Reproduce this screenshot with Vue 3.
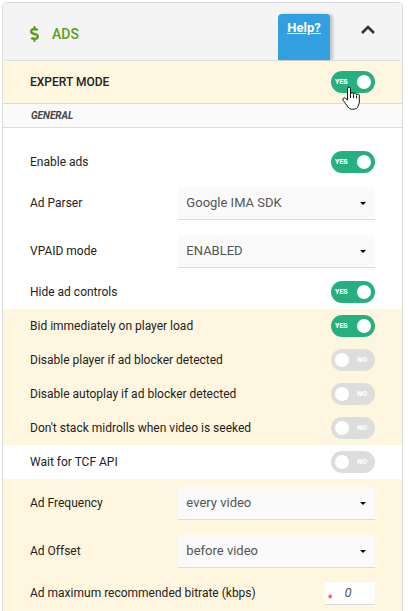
<script setup>
import { ref } from "vue";

const open = ref(true);
const expertMode = ref(true);

const settings = ref([
  { id: "enableAds", label: "Enable ads", type: "toggle", value: true },
  {
    id: "adParser",
    label: "Ad Parser",
    type: "select",
    value: "Google IMA SDK",
    options: ["Google IMA SDK"],
  },
  {
    id: "vpaidMode",
    label: "VPAID mode",
    type: "select",
    value: "ENABLED",
    options: ["ENABLED"],
  },
  { id: "hideControls", label: "Hide ad controls", type: "toggle", value: true },
  {
    id: "bidOnLoad",
    label: "Bid immediately on player load",
    type: "toggle",
    value: true,
    expert: true,
  },
  {
    id: "disablePlayer",
    label: "Disable player if ad blocker detected",
    type: "toggle",
    value: false,
    expert: true,
  },
  {
    id: "disableAutoplay",
    label: "Disable autoplay if ad blocker detected",
    type: "toggle",
    value: false,
    expert: true,
  },
  {
    id: "dontStack",
    label: "Don't stack midrolls when video is seeked",
    type: "toggle",
    value: false,
    expert: true,
  },
  { id: "waitTcf", label: "Wait for TCF API", type: "toggle", value: false },
  {
    id: "adFrequency",
    label: "Ad Frequency",
    type: "select",
    value: "every video",
    options: ["every video"],
    expert: true,
  },
  {
    id: "adOffset",
    label: "Ad Offset",
    type: "select",
    value: "before video",
    options: ["before video"],
    expert: true,
  },
  {
    id: "maxBitrate",
    label: "Ad maximum recommended bitrate (kbps)",
    type: "number",
    value: "0",
    expert: true,
  },
]);
</script>
<template>
  <section class="panel">
    <header class="panel-header">
      <svg class="dollar" viewBox="0 0 288 512" aria-hidden="true">
        <path
          d="M209 233l-108-31c-12-4-21-15-21-28 0-16 13-29 29-29h66c12 0 24 4 34 10 6 4 14 3 20-2l35-34c7-7 6-18-2-24-25-19-55-30-86-31V16c0-9-7-16-16-16h-32c-9 0-16 7-16 16v48h-3C45 64-6 117 1 182c5 46 40 83 85 96l102 30c12 4 21 15 21 28 0 16-13 29-29 29h-66c-12 0-24-4-34-10-6-4-14-3-20 2l-35 34c-7 7-6 18 2 24 25 19 55 30 85 31v50c0 9 7 16 16 16h32c9 0 16-7 16-16v-48c47-1 90-29 106-73 22-61-16-125-73-142z"
        />
      </svg>
      <h1>ADS</h1>
      <a class="help" href="#help">Help?</a>
      <button
        class="collapse"
        type="button"
        aria-label="Toggle section"
        :aria-expanded="open"
        @click="open = !open"
      >
        <svg viewBox="0 0 14 9" aria-hidden="true">
          <path d="M1 8L7 2L13 8" />
        </svg>
      </button>
    </header>

    <div v-if="open" class="panel-body">
      <div class="expert-mode">
        <label for="expertMode">EXPERT MODE</label>
        <span class="toggle" :class="{ on: expertMode }">
          <input id="expertMode" v-model="expertMode" type="checkbox" />
          <span class="toggle-text">{{ expertMode ? "YES" : "NO" }}</span>
          <svg class="pointer" viewBox="0 0 18 24" aria-hidden="true">
            <path
              d="M5.5 14V2.5a1.5 1.5 0 0 1 3 0V8a1.4 1.4 0 0 1 3 .3 1.4 1.4 0 0 1 3 .7 1.3 1.3 0 0 1 2.8 1V16c0 2.500-1.300 3.500-1.800 5.500C14.500 22.700 13 23.200 10.500 23.200S7 22.500 6 21C4.500 18.500 2.500 16.500 1 14.200.2 12.500 2 11.200 3.300 12.200z"
            />
            <path class="fingers" d="M8.500 8v4M11.500 8.500v3.500M14.500 9.500v3" />
          </svg>
        </span>
      </div>
      <h2>GENERAL</h2>

      <div class="settings">
        <div
          v-for="item in settings"
          :key="item.id"
          class="row"
          :class="{ tall: item.type === 'select', expert: item.expert }"
        >
          <label :for="item.id">{{ item.label }}</label>

          <span
            v-if="item.type === 'toggle'"
            class="toggle"
            :class="{ on: item.value }"
          >
            <input :id="item.id" v-model="item.value" type="checkbox" />
            <span class="toggle-text">{{ item.value ? "YES" : "NO" }}</span>
          </span>

          <span v-else-if="item.type === 'select'" class="select-box">
            <select :id="item.id" v-model="item.value">
              <option v-for="option in item.options" :key="option">
                {{ option }}
              </option>
            </select>
            <svg viewBox="0 0 6 3" aria-hidden="true">
              <path d="M0 0H6L3 3Z" />
            </svg>
          </span>

          <span v-else class="number-box">
            <span class="required">*</span>
            <input
              :id="item.id"
              v-model="item.value"
              type="text"
              inputmode="numeric"
              required
            />
          </span>
        </div>
      </div>
    </div>
  </section>
</template>
<style>
body {
  background-color: white;
}
</style>
<style scoped>
* {
  box-sizing: border-box;
}

.panel {
  display: flex;
  flex-direction: column;
  min-height: calc(100vh - 2px);
  margin: 2px 5px 0 2px;
  border: 1px solid #dcdcdc;
  border-bottom: none;
  border-radius: 5px 5px 0 0;
  font-family: Roboto, sans-serif;
  font-size: 12px;
  color: #222;
}

.panel-header {
  display: flex;
  align-items: center;
  height: 58px;
  padding: 0 27px;
  border-bottom: 1px solid #dcdcdc;
  border-radius: 4px;
  background-color: #f4f4f4;
}

.dollar {
  width: 9px;
  height: 16px;
  margin-top: 4px;
  fill: #5aa020;
}

h1 {
  flex: 1;
  margin: 4px 0 0 13px;
  font-size: 14px;
  font-weight: 500;
  color: #5aa020;
}

.help {
  align-self: flex-end;
  width: 52px;
  height: 46px;
  padding-top: 6px;
  border-radius: 4px 4px 0 0;
  background-color: #329fde;
  box-shadow: 3px 0 3px rgba(0, 0, 0, 0.2);
  color: white;
  font-size: 13px;
  font-weight: 700;
  line-height: 16px;
  text-align: center;
}

.collapse {
  display: flex;
  margin: 0 0 4px 31px;
  padding: 0;
  border: none;
  background: none;
}

.collapse svg {
  width: 14px;
  height: 9px;
  fill: none;
  stroke: #333;
  stroke-width: 2.6;
}

.panel-body {
  display: flex;
  flex: 1;
  flex-direction: column;
}

.expert-mode {
  display: flex;
  align-items: center;
  justify-content: space-between;
  height: 43px;
  padding: 0 27px;
  border-bottom: 1px solid #dcdcdc;
  background-color: #fff6df;
  font-weight: 500;
}

h2 {
  margin: 0;
  padding: 0 28px;
  border-bottom: 1px solid #dcdcdc;
  background-color: #fafafa;
  color: #444;
  font-size: 10px;
  font-style: italic;
  font-weight: 700;
  line-height: 23px;
}

.settings {
  display: flex;
  flex: 1;
  flex-direction: column;
  padding-top: 17px;
}

.row {
  display: flex;
  align-items: center;
  justify-content: space-between;
  min-height: 34px;
  padding: 0 27px;
}

.row.tall {
  min-height: 48px;
}

.row.expert {
  background-color: #fff6df;
}

.row:last-child {
  flex: 1;
}

.toggle {
  position: relative;
  display: grid;
  flex: none;
  align-items: center;
  width: 44px;
  height: 22px;
}

.toggle input,
.toggle-text {
  grid-area: 1 / 1;
}

.toggle input {
  appearance: none;
  display: flex;
  align-items: center;
  width: 44px;
  height: 22px;
  margin: 0;
  padding: 0 4px;
  border-radius: 11px;
  background-color: #ddd;
  cursor: pointer;
}

.toggle input::before {
  content: "";
  width: 14px;
  height: 14px;
  border-radius: 50%;
  background-color: white;
}

.toggle input:checked {
  justify-content: flex-end;
  background-color: #27b07f;
}

.toggle-text {
  z-index: 1;
  justify-self: end;
  margin: 0 8px;
  color: white;
  font-size: 7px;
  font-weight: 900;
  pointer-events: none;
}

.toggle.on .toggle-text {
  justify-self: start;
  margin: 0 4px;
}

.pointer {
  position: absolute;
  z-index: 2;
  top: 15px;
  left: 11px;
  width: 18px;
  height: 24px;
  fill: white;
  stroke: #111;
  stroke-width: 1;
  pointer-events: none;
}

.fingers {
  fill: none;
}

.select-box {
  display: flex;
  flex: none;
  align-items: center;
  width: 57%;
}

.select-box select {
  appearance: none;
  width: 100%;
  height: 33px;
  padding: 0 24px 0 8px;
  border: none;
  border-bottom: 1px solid #dcdcdc;
  border-radius: 4px 4px 0 0;
  background-color: #fafafa;
  color: #555;
  font-family: inherit;
  font-size: 13px;
}

.select-box svg {
  flex: none;
  width: 6px;
  height: 3px;
  margin-left: -15px;
  margin-right: 9px;
  pointer-events: none;
}

.number-box {
  display: flex;
  align-items: flex-end;
  width: 50px;
  height: 23px;
  border-bottom: 1px solid #dcdcdc;
  background-color: white;
}

.required {
  width: 10px;
  padding-left: 3px;
  color: red;
  font-size: 10px;
  line-height: 10px;
}

.number-box input {
  width: 26px;
  height: 22px;
  padding: 0;
  border: none;
  background: none;
  color: #555;
  font-family: inherit;
  font-size: 13px;
  font-style: italic;
  text-align: center;
}
</style>
